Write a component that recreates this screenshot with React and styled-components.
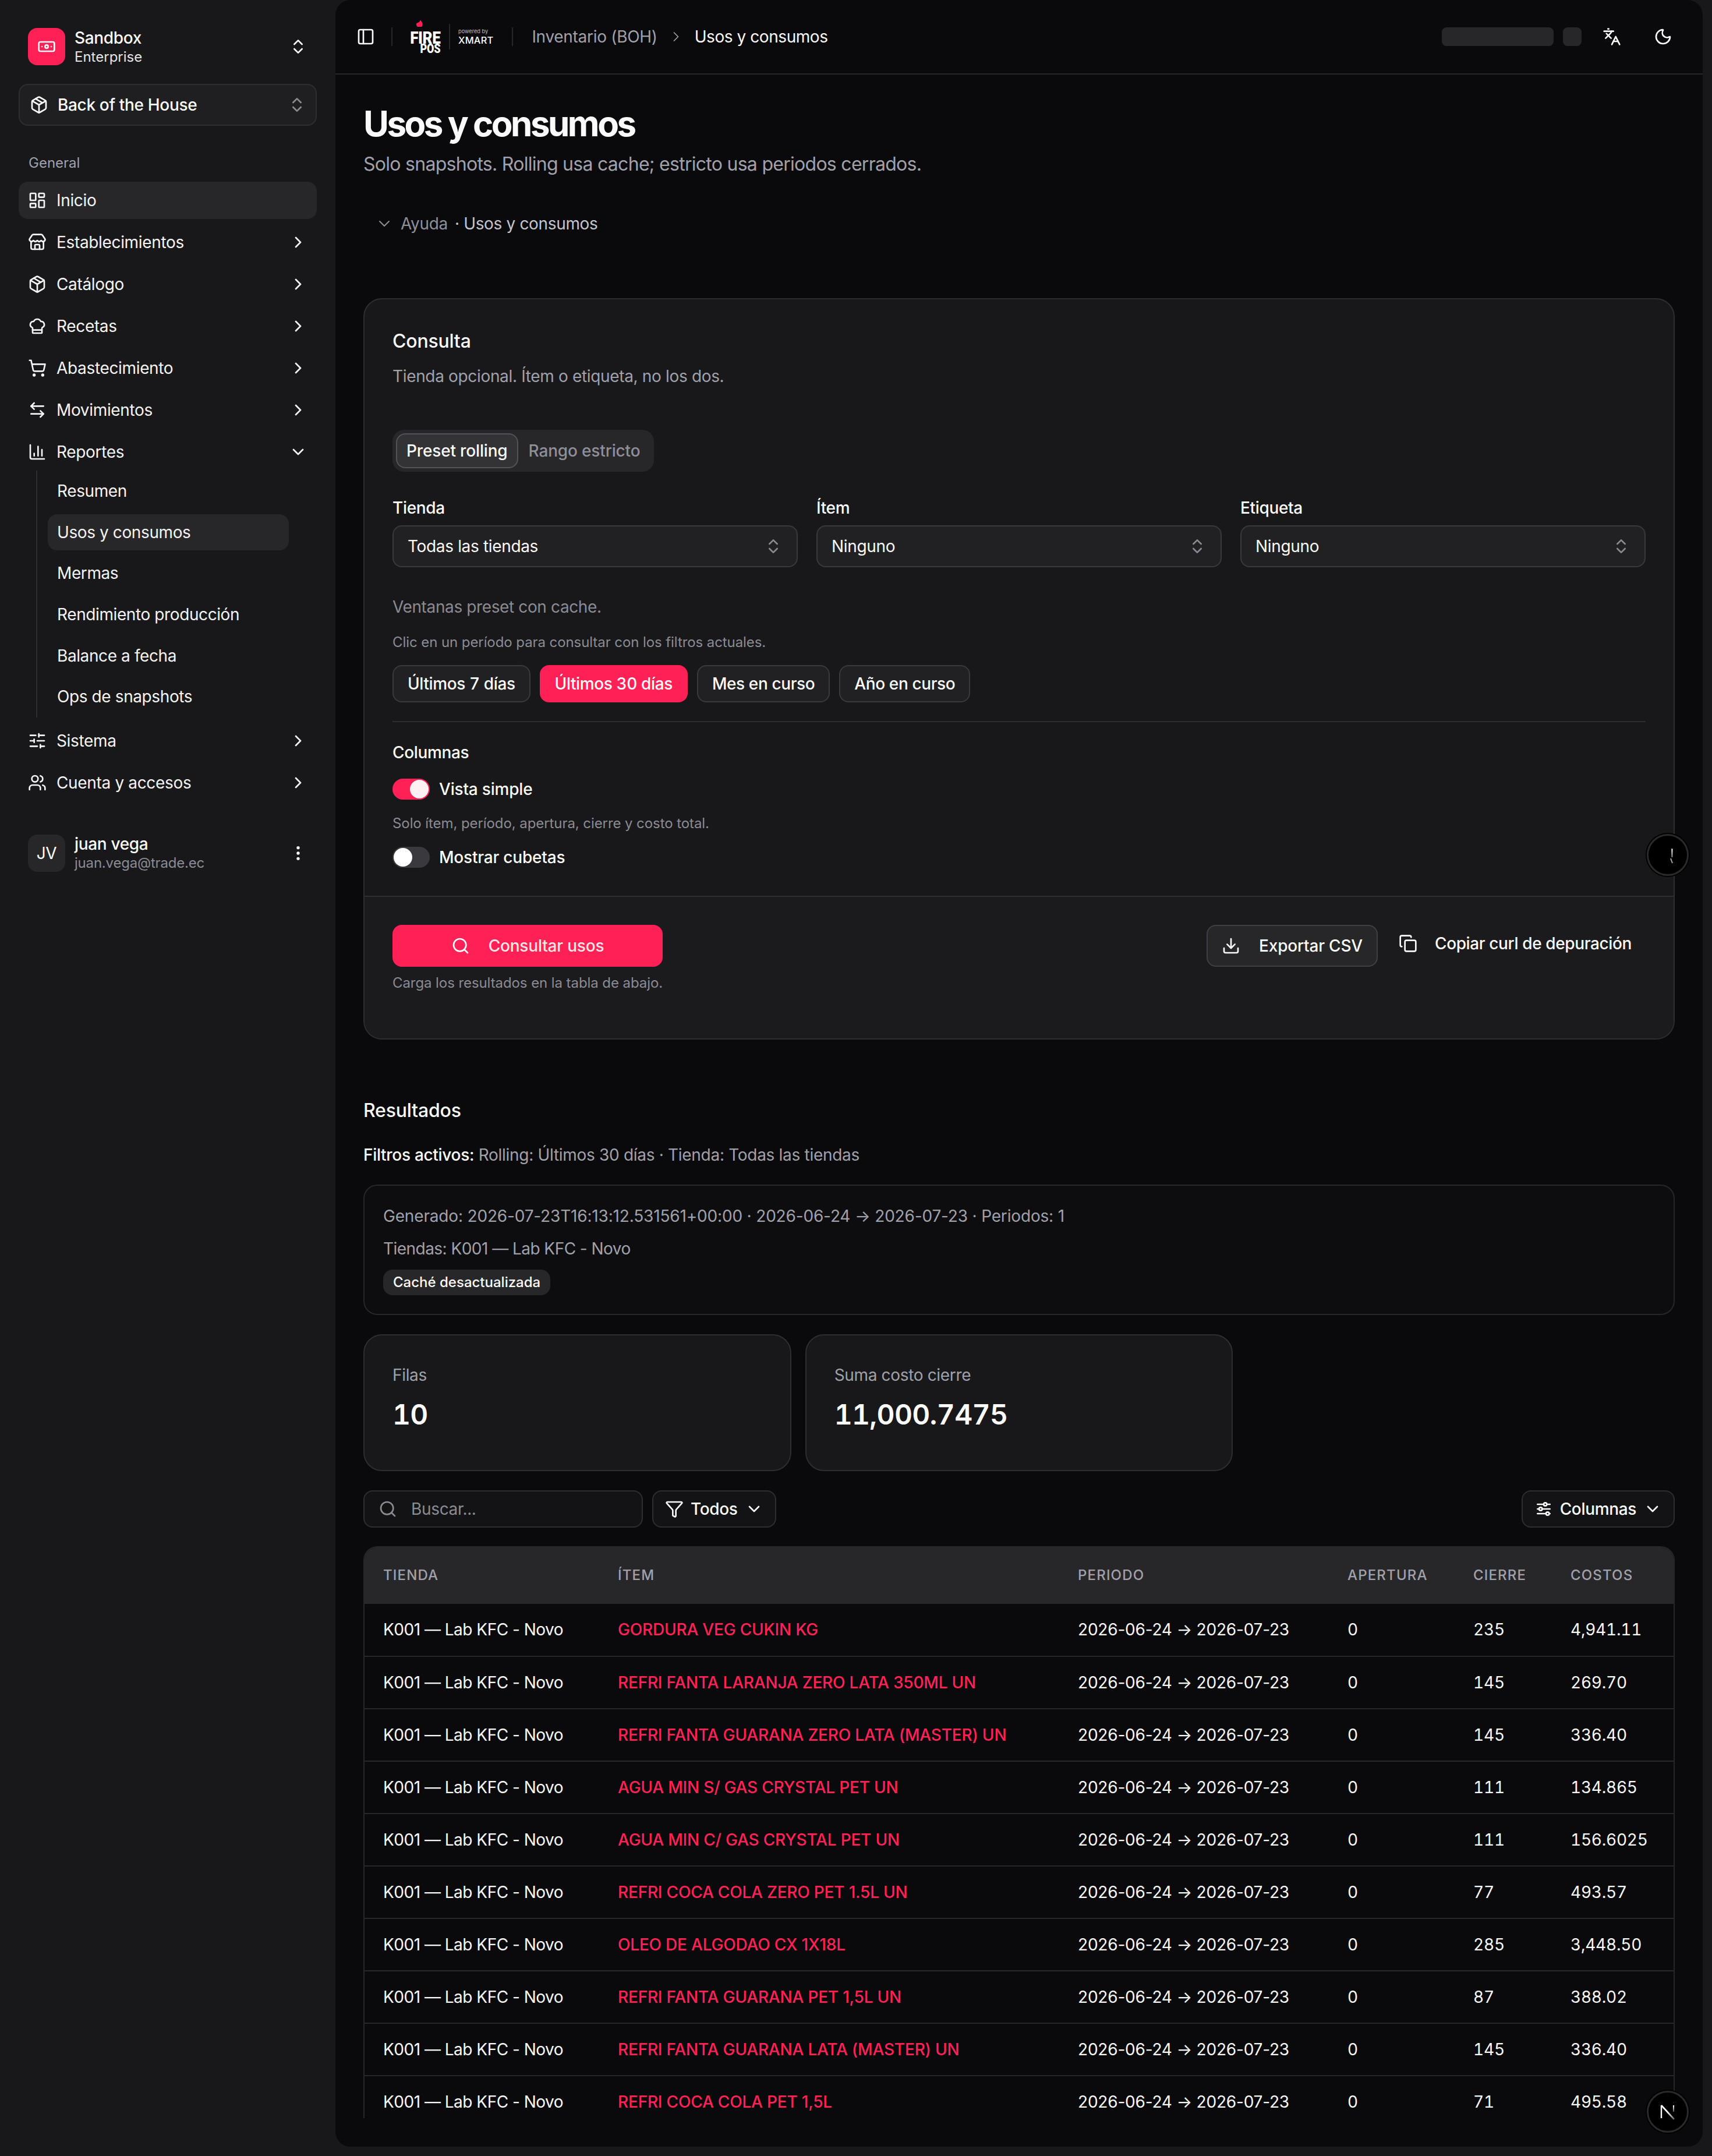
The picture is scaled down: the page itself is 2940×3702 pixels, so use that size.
import React from "react";
import styled, { createGlobalStyle } from "styled-components";
import {
  Banknote, ChevronsUpDown, Package, LayoutDashboard, Store, ChefHat, ShoppingCart, ArrowLeftRight,
  ChartColumn, SlidersHorizontal, Users, EllipsisVertical, PanelLeft, ChevronRight, ChevronDown,
  Languages, Moon, Download, Copy, Search, Funnel,
} from "lucide-react";
import { TbAdjustmentsHorizontal } from "react-icons/tb";

const Global = createGlobalStyle`
  html, body { margin: 0; padding: 0; background: #18181b; }
  #root { zoom: 2; width: 1470px; height: 1851px; overflow: hidden; }
  * { box-sizing: border-box; }
  body { font-family: Inter, "Noto Sans", sans-serif; color: #fafafa; font-size: 14px; line-height: 20px; letter-spacing: -0.17px; }
`;

const Shell = styled.div`
  position: relative; display: flex; width: 1470px; height: 1851px; background: #18181b;
`;

/* ---------- Sidebar ---------- */
const Sidebar = styled.aside`
  width: 288px; flex: none; display: flex; flex-direction: column; padding: 24px 16px 0;
`;
const TeamRow = styled.div`
  display: flex; align-items: center; gap: 8px; padding: 0 8px; height: 32px;
`;
const TeamLogo = styled.div`
  width: 32px; height: 32px; flex: none; border-radius: 8px; display: flex; align-items: center; justify-content: center;
  background: ${p => p.$muted ? "#27272a" : "#ff2056"}; color: #fafafa; font-size: 14px;
`;
const TeamText = styled.div`
  flex: 1; display: flex; flex-direction: column; min-width: 0;
`;
const TeamName = styled.span`
  font-size: 14px; line-height: 17.5px; font-weight: 500; color: #fafafa;
`;
const TeamPlan = styled.span`
  font-size: 12px; line-height: 15px; letter-spacing: ${p => p.$muted ? "-0.1px" : "0"}; color: ${p => p.$muted ? "#8b8b94" : "#e4e4e7"};
`;
const ModuleSelect = styled.div`
  margin-top: 16px; height: 36px; display: flex; align-items: center; padding: 0 8px 0 8.5px; gap: 8px;
  background: #1f1f22; border: 1px solid #2e2e32; border-radius: 8px;
  font-size: 14px; font-weight: 500; color: #fafafa;
`;
const ModuleName = styled.span`flex: 1;`;
const Dim = styled.span`display: flex; color: #8b8b94;`;
const GroupLabel = styled.div`
  margin-top: 24px; padding: 0 8.5px; font-size: 12px; line-height: 16px; color: #a1a1aa; letter-spacing: 0;
`;
const Menu = styled.nav`
  margin-top: 8px; display: flex; flex-direction: column; gap: 4px;
`;
const MenuItem = styled.div`
  height: 32px; display: flex; align-items: center; gap: 8.5px; padding: 0 8px; border-radius: 8px;
  font-size: 14px; color: #f4f4f5; background: ${p => p.$active ? "#27272a" : "transparent"};
`;
const MenuText = styled.span`flex: 1;`;
const SubMenu = styled.div`
  margin: -4px 0 0 15px; width: 217px; padding: 2px 0 2px 9px; border-left: 1px solid #2e2e32;
  display: flex; flex-direction: column; gap: 4px;
`;
const SubItem = styled.div`
  height: 31.3px; display: flex; align-items: center; padding: 0 8px; border-radius: 8px;
  font-size: 14px; letter-spacing: -0.2px; color: #f4f4f5; background: ${p => p.$active ? "#27272a" : "transparent"};
`;
const UserRow = styled(TeamRow)`
  margin-top: 28.5px;
`;

/* ---------- Main frame ---------- */
const Main = styled.main`
  width: 1174px; height: 1843px; flex: none; background: #0a0a0c; border-radius: 13px;
  display: flex; flex-direction: column; padding-bottom: 24.5px; overflow: hidden;
`;
const Header = styled.header`
  height: 64px; flex: none; display: flex; align-items: center; padding: 0 16px 0 12px;
  border-bottom: 1px solid #27272a;
`;
const IconButton = styled.div`
  width: ${p => p.$size || 36}px; height: ${p => p.$size || 28}px; display: flex; align-items: center; justify-content: center; flex: none; color: #fafafa;
`;
const VSep = styled.div`
  width: 1px; height: ${p => p.$h || 16}px; background: #27272a; flex: none; margin: ${p => p.$m || "0"};
`;
const Logo = styled.div`
  position: relative; display: flex; align-items: center; height: 32px; flex: none; margin-left: -1px;
`;
const FireMark = styled.div`
  position: relative; width: 26px; height: 29px; display: flex; flex-direction: column; align-items: flex-end; justify-content: flex-end; font-family: Roboto, sans-serif; font-weight: 900; color: #fff;
`;
const FireFlame = styled.svg`
  position: absolute; left: 5px; top: 0; width: 6px; height: 6px;
`;
const FireWord = styled.span`
  font-size: 14.8px; line-height: 11.5px; letter-spacing: -0.2px; transform: translateY(1.6px) scaleX(.88); transform-origin: right center; white-space: nowrap;
`;
const PosWord = styled.span`
  font-size: 11px; line-height: 9px; letter-spacing: -0.2px; transform: translateY(.5px) scaleX(.82); transform-origin: right center;
`;
const PowerBox = styled.div`
  display: flex; flex-direction: column; color: #fff;
`;
const Powered = styled.span`
  font-size: 4.6px; line-height: 6px; color: #bdbdc2; letter-spacing: 0;
`;
const Xmart = styled.span`
  font-size: 8.2px; line-height: 9px; font-weight: 500; letter-spacing: .1px;
`;
const Crumb = styled.span`
  font-size: 14px; letter-spacing: ${p => p.$on ? "-0.22px" : "-0.15px"}; color: ${p => p.$on ? "#fafafa" : "#a1a1aa"}; white-space: nowrap;
`;
const CrumbChevron = styled.span`
  display: flex; color: #a1a1aa; margin: 0 9px;
`;
const HeaderRight = styled.div`
  margin-left: auto; display: flex; align-items: center; gap: 8px;
`;
const Skeleton = styled.div`
  width: ${p => p.$w}px; height: 16px; border-radius: 4px; background: #27272a;
`;

/* ---------- Scrolling content ---------- */
const Content = styled.div`
  flex: 1; min-height: 0; overflow: hidden; padding: 24px 24px 0;
`;
const Title = styled.h1`
  margin: 0; font-size: 30px; line-height: 36px; font-weight: 700; letter-spacing: -1.75px; color: #fafafa;
`;
const Subtitle = styled.p`
  margin: 5px 0 0; font-size: 16px; line-height: 24px; letter-spacing: -0.36px; color: #a1a1aa;
`;
const HelpRow = styled.div`
  margin-top: 21px; height: 36px; padding-left: 10px; display: flex; align-items: center; gap: 6px; font-size: 14px; color: #8f8f98;
`;
const HelpTitle = styled.span`color: #c4c4cc;`;

const Card = styled.section`
  margin-top: 46px; height: 636.5px; border: 1px solid #2e2e32; border-radius: 16px; background: #18181b; display: flex; flex-direction: column; overflow: hidden;
`;
const CardBody = styled.div`
  padding: 24px 24px 0; height: 512px; flex: none;
`;
const CardTitle = styled.h2`
  margin: 0; font-size: 16px; line-height: 24px; font-weight: 500; letter-spacing: -0.1px; color: #fafafa;
`;
const CardDesc = styled.p`
  margin: 8px 0 0; font-size: 14px; line-height: 20px; color: #a1a1aa;
`;
const Tabs = styled.div`
  margin-top: 36px; display: inline-flex; height: 36px; padding: 3px; border-radius: 10px; background: #27272a; vertical-align: top;
`;
const Tab = styled.div`
  height: 30px; padding: 0 8px; display: flex; align-items: center; border-radius: 8px; font-size: 14px; font-weight: 500; letter-spacing: -0.08px;
  border: 1px solid ${p => p.$on ? "#52525b" : "transparent"}; background: ${p => p.$on ? "#333336" : "transparent"};
  color: ${p => p.$on ? "#fafafa" : "#8f8f98"};
`;
const FieldGrid = styled.div`
  margin-top: 21px; display: grid; grid-template-columns: repeat(3, 1fr); gap: 16px;
`;
const Field = styled.div`
  display: flex; flex-direction: column; gap: 5px;
`;
const Label = styled.label`
  font-size: 14px; line-height: 20px; font-weight: 500; color: #fafafa;
`;
const SelectBox = styled.div`
  height: 36px; display: flex; align-items: center; justify-content: space-between; padding: 0 12px;
  background: #212124; border: 1px solid #3a3a3e; border-radius: 8px; font-size: 14px; color: #fafafa;
`;
const Muted = styled.p`
  margin: ${p => p.$m || "0"}; font-size: ${p => p.$small ? 12 : 14}px; line-height: ${p => p.$small ? 16 : 20}px; letter-spacing: ${p => p.$small ? "-0.04px" : "-0.19px"}; color: #8b8b94;
`;
const PresetRow = styled.div`
  margin-top: 11.5px; display: flex; gap: 8px;
`;
const Preset = styled.div`
  height: 32px; padding: 0 12px; display: flex; align-items: center; border-radius: 8px; font-size: 14px; font-weight: 500; letter-spacing: -0.2px; font-variant-numeric: tabular-nums;
  border: 1px solid ${p => p.$on ? "#ff2056" : "#3a3a3e"}; background: ${p => p.$on ? "#ff2056" : "#212124"}; color: #fafafa;
`;
const Divider = styled.hr`
  margin: 16px 0 0; border: 0; height: 1px; background: #2e2e32;
`;
const ColumnsLabel = styled.div`
  margin-top: 16px; font-size: 14px; line-height: 20px; font-weight: 500; color: #fafafa;
`;
const SwitchRow = styled.div`
  margin-top: ${p => p.$mt}px; display: flex; align-items: center; gap: 8px; height: 20px; font-size: 14px; font-weight: 500; letter-spacing: -0.1px; color: #fafafa;
`;
const Track = styled.span`
  width: 32px; height: 18.4px; border-radius: 10px; padding: 1.2px; display: flex; flex: none;
  justify-content: ${p => p.$on ? "flex-end" : "flex-start"}; background: ${p => p.$on ? "#ff2056" : "#3a3a3e"};
`;
const Thumb = styled.span`
  width: 16px; height: 16px; border-radius: 50%; background: ${p => p.$on ? "#fff1f3" : "#ffffff"};
`;
const CardFooter = styled.div`
  flex: 1; border-top: 1px solid #2e2e32; background: #1b1b1e; padding: 24px 24px 0; display: flex; justify-content: space-between; align-items: flex-start;
`;
const SubmitBox = styled.div`
  display: flex; flex-direction: column; gap: 6px;
`;
const Primary = styled.div`
  width: 232px; height: 36px; display: flex; align-items: center; justify-content: center; gap: 16px; border-radius: 8px;
  background: #ff2056; color: #ffe4e6; font-size: 14px; font-weight: 500; letter-spacing: -0.1px;
`;
const FooterActions = styled.div`
  display: flex; align-items: flex-start; gap: 6px;
`;
const Outline = styled.div`
  height: 36px; display: flex; align-items: center; gap: 16px; padding: 0 12px; border-radius: 8px; border: 1px solid #3f3f46; background: #27272a; font-size: 14px; font-weight: 500; letter-spacing: -0.1px; color: #fafafa;
`;
const Ghost = styled.div`
  height: 32px; display: flex; align-items: center; gap: 15px; padding: 0 12px; font-size: 14px; font-weight: 500; letter-spacing: -0.19px; color: #fafafa;
`;

/* ---------- Results ---------- */
const ResultsTitle = styled.h2`
  margin: 49px 0 0; font-size: 16px; line-height: 24px; font-weight: 500; letter-spacing: -0.1px; color: #fafafa;
`;
const ActiveFilters = styled.p`
  margin: 16px 0 0; font-size: 14px; line-height: 20px; letter-spacing: -0.15px; color: #a1a1aa;
`;
const Strong = styled.span`font-weight: 500; color: #fafafa;`;
const MetaCard = styled.div`
  margin-top: 15.5px; padding: 16px; border: 1px solid #27272a; border-radius: 12px; background: #0d0d10; display: flex; flex-direction: column; align-items: flex-start; gap: 8px; font-size: 14px; line-height: 20px; color: #a1a1aa;
`;
const MetaLine = styled.span`
  letter-spacing: ${p => p.$ls}px;
`;
const Badge = styled.span`
  height: 22px; padding: 0 8.5px; display: flex; align-items: center; border-radius: 8px; background: #27272a; font-size: 12px; font-weight: 500; letter-spacing: 0; color: #fafafa;
`;
const KpiGrid = styled.div`
  margin-top: 16.5px; display: grid; grid-template-columns: repeat(3, 1fr); gap: 12px;
`;
const Kpi = styled.div`
  height: 117.3px; padding: 24px; border: 1px solid #2e2e32; border-radius: 16px; background: #18181b;
`;
const KpiLabel = styled.div`
  font-size: 14px; line-height: 20px; color: #a1a1aa;
`;
const KpiValue = styled.div`
  margin-top: 8px; font-size: 24px; line-height: 32px; font-weight: 600; color: #fafafa; letter-spacing: -0.35px; font-variant-numeric: tabular-nums;
`;
const Toolbar = styled.div`
  margin-top: 16.7px; display: flex; align-items: center; gap: 8px;
`;
const SearchBox = styled.div`
  width: 240px; height: 32px; display: flex; align-items: center; gap: 12px; padding: 0 12px; border: 1px solid #2e2e32; border-radius: 8px; background: #131316; color: #8b8b94; font-size: 14px;
`;
const ToolButton = styled.div`
  height: 32px; display: flex; align-items: center; gap: ${p => p.$gap || 6}px; padding: 0 10px; border: 1px solid #2e2e32; border-radius: 8px; background: #131316; color: #fafafa; font-size: 14px; font-weight: 500; margin-left: ${p => p.$right ? "auto" : "0"};
`;
const TableWrap = styled.div`
  margin-top: 16px; border: 1px solid #27272a; border-radius: 12px 12px 0 0; overflow: hidden;
`;
const Table = styled.table`
  width: 100%; border-collapse: collapse; table-layout: fixed; font-size: 14px;
`;
const Th = styled.th`
  height: 48.5px; padding: 0 16px; text-align: left; background: #27272a; color: #a1a1aa; font-size: 12px; font-weight: 500; letter-spacing: .58px; text-transform: uppercase; white-space: nowrap;
`;
const Tr = styled.tr`
  border-top: 1px solid #27272a;
  &:first-child { border-top: 0; }
`;
const Td = styled.td`
  height: 45px; padding: 0 16px; color: ${p => p.$link ? "#ff2056" : "#fafafa"}; font-weight: ${p => p.$link ? 500 : 400}; white-space: nowrap; letter-spacing: ${p => p.$ls}px;
  font-variant-numeric: ${p => p.$num ? "tabular-nums" : "normal"};
`;
const DevBadge = styled.div`
  position: absolute; left: 1414px; top: ${p => p.$top}px; width: 36px; height: 36px; border-radius: 50%; background: #000; border: 1.5px solid #2a2a2c; display: flex; align-items: center; justify-content: center; box-shadow: 0 0 0 1px #000;
`;

const Ic = ({ as: C, size = 16, sw = 2 }) => <C size={size} strokeWidth={sw} />;

const nav = [
  [Store, "Establecimientos"], [Package, "Catálogo"], [ChefHat, "Recetas"], [ShoppingCart, "Abastecimiento"], [ArrowLeftRight, "Movimientos"],
];
const subs = ["Resumen", "Usos y consumos", "Mermas", "Rendimiento producción", "Balance a fecha", "Ops de snapshots"];
const rows = [
  ["GORDURA VEG CUKIN KG", "235", "4,941.11"],
  ["REFRI FANTA LARANJA ZERO LATA 350ML UN", "145", "269.70"],
  ["REFRI FANTA GUARANA ZERO LATA (MASTER) UN", "145", "336.40"],
  ["AGUA MIN S/ GAS CRYSTAL PET UN", "111", "134.865"],
  ["AGUA MIN C/ GAS CRYSTAL PET UN", "111", "156.6025"],
  ["REFRI COCA COLA ZERO PET 1.5L UN", "77", "493.57"],
  ["OLEO DE ALGODAO CX 1X18L", "285", "3,448.50"],
  ["REFRI FANTA GUARANA PET 1,5L UN", "87", "388.02"],
  ["REFRI FANTA GUARANA LATA (MASTER) UN", "145", "336.40"],
  ["REFRI COCA COLA PET 1,5L", "71", "495.58"],
];
const widths = [201.5, 395, 231.5, 108, 83.5, 104.5];
const heads = ["Tienda", "Ítem", "Periodo", "Apertura", "Cierre", "Costos"];

export default function App() {
  return (
    <Shell>
      <Global />
      <Sidebar>
        <TeamRow>
          <TeamLogo><Banknote size={16} strokeWidth={2} /></TeamLogo>
          <TeamText><TeamName>Sandbox</TeamName><TeamPlan>Enterprise</TeamPlan></TeamText>
          <Ic as={ChevronsUpDown} />
        </TeamRow>
        <ModuleSelect>
          <Ic as={Package} />
          <ModuleName>Back of the House</ModuleName>
          <Dim><Ic as={ChevronsUpDown} /></Dim>
        </ModuleSelect>
        <GroupLabel>General</GroupLabel>
        <Menu>
          <MenuItem $active><Ic as={LayoutDashboard} /><MenuText>Inicio</MenuText></MenuItem>
          {nav.map(([I, t]) => (
            <MenuItem key={t}><Ic as={I} /><MenuText>{t}</MenuText><Ic as={ChevronRight} /></MenuItem>
          ))}
          <MenuItem><Ic as={ChartColumn} /><MenuText>Reportes</MenuText><Ic as={ChevronDown} /></MenuItem>
          <SubMenu>
            {subs.map(s => <SubItem key={s} $active={s === "Usos y consumos"}>{s}</SubItem>)}
          </SubMenu>
          <MenuItem><Ic as={SlidersHorizontal} /><MenuText>Sistema</MenuText><Ic as={ChevronRight} /></MenuItem>
          <MenuItem><Ic as={Users} /><MenuText>Cuenta y accesos</MenuText><Ic as={ChevronRight} /></MenuItem>
        </Menu>
        <UserRow>
          <TeamLogo $muted>JV</TeamLogo>
          <TeamText><TeamName>juan vega</TeamName><TeamPlan $muted>juan.vega@trade.ec</TeamPlan></TeamText>
          <Ic as={EllipsisVertical} />
        </UserRow>
      </Sidebar>

      <Main>
        <Header>
          <IconButton $size={28}><Ic as={PanelLeft} /></IconButton>
          <VSep $m="0 16px 0 8px" />
          <Logo>
            <FireMark>
              <FireFlame viewBox="0 0 12 12"><path fill="#ff2056" d="M8 0c.6 2.4 3.6 4 3.6 7.2A4.6 4.6 0 0 1 1 8.6C.4 6.4 2.2 5.2 3.6 5 5.4 4.6 7.4 2.6 8 0z" /></FireFlame>
              <FireWord>FIRE</FireWord>
              <PosWord>POS</PosWord>
            </FireMark>
            <VSep $h={22} $m="0 7px 0 7.5px" />
            <PowerBox><Powered>powered by</Powered><Xmart>XMART</Xmart></PowerBox>
          </Logo>
          <VSep $m="0 16px 0 16px" />
          <Crumb>Inventario (BOH)</Crumb>
          <CrumbChevron><ChevronRight size={14} strokeWidth={1.5} /></CrumbChevron>
          <Crumb $on>Usos y consumos</Crumb>
          <HeaderRight>
            <Skeleton $w={96} />
            <Skeleton $w={16} />
            <IconButton><Ic as={Languages} /></IconButton>
            <IconButton><Ic as={Moon} /></IconButton>
          </HeaderRight>
        </Header>

        <Content>
          <Title>Usos y consumos</Title>
          <Subtitle>Solo snapshots. Rolling usa cache; estricto usa periodos cerrados.</Subtitle>
          <HelpRow>
            <ChevronDown size={16} strokeWidth={1.5} />
            <span>Ayuda</span>
            <HelpTitle>· Usos y consumos</HelpTitle>
          </HelpRow>

          <Card>
            <CardBody>
              <CardTitle>Consulta</CardTitle>
              <CardDesc>Tienda opcional. Ítem o etiqueta, no los dos.</CardDesc>
              <Tabs>
                <Tab $on>Preset rolling</Tab>
                <Tab>Rango estricto</Tab>
              </Tabs>
              <FieldGrid>
                {[["Tienda", "Todas las tiendas"], ["Ítem", "Ninguno"], ["Etiqueta", "Ninguno"]].map(([l, v]) => (
                  <Field key={l}>
                    <Label>{l}</Label>
                    <SelectBox>{v}<Dim><Ic as={ChevronsUpDown} /></Dim></SelectBox>
                  </Field>
                ))}
              </FieldGrid>
              <Muted $m="24px 0 0">Ventanas preset con cache.</Muted>
              <Muted $small $m="12.5px 0 0">Clic en un período para consultar con los filtros actuales.</Muted>
              <PresetRow>
                <Preset>Últimos 7 días</Preset>
                <Preset $on>Últimos 30 días</Preset>
                <Preset>Mes en curso</Preset>
                <Preset>Año en curso</Preset>
              </PresetRow>
              <Divider />
              <ColumnsLabel>Columnas</ColumnsLabel>
              <SwitchRow $mt={11.5}><Track $on><Thumb $on /></Track>Vista simple</SwitchRow>
              <Muted $small $m="11.5px 0 0">Solo ítem, período, apertura, cierre y costo total.</Muted>
              <SwitchRow $mt={11}><Track><Thumb /></Track>Mostrar cubetas</SwitchRow>
            </CardBody>
            <CardFooter>
              <SubmitBox>
                <Primary><Search size={16} strokeWidth={2} color="#fff" />Consultar usos</Primary>
                <Muted $small>Carga los resultados en la tabla de abajo.</Muted>
              </SubmitBox>
              <FooterActions>
                <Outline><Ic as={Download} />Exportar CSV</Outline>
                <Ghost><Ic as={Copy} />Copiar curl de depuración</Ghost>
              </FooterActions>
            </CardFooter>
          </Card>

          <ResultsTitle>Resultados</ResultsTitle>
          <ActiveFilters><Strong>Filtros activos:</Strong> Rolling: Últimos 30 días · Tienda: Todas las tiendas</ActiveFilters>
          <MetaCard>
            <MetaLine $ls={-0.085}>Generado: 2026-07-23T16:13:12.531561+00:00 · 2026-06-24 → 2026-07-23 · Periodos: 1</MetaLine>
            <MetaLine $ls={-0.27}>Tiendas: K001 — Lab KFC - Novo</MetaLine>
            <Badge>Caché desactualizada</Badge>
          </MetaCard>
          <KpiGrid>
            <Kpi><KpiLabel>Filas</KpiLabel><KpiValue>10</KpiValue></Kpi>
            <Kpi><KpiLabel>Suma costo cierre</KpiLabel><KpiValue>11,000.7475</KpiValue></Kpi>
          </KpiGrid>
          <Toolbar>
            <SearchBox><Search size={16} strokeWidth={2} />Buscar...</SearchBox>
            <ToolButton><Ic as={Funnel} />Todos<ChevronDown size={16} strokeWidth={2} /></ToolButton>
            <ToolButton $right><TbAdjustmentsHorizontal size={16} />Columnas<ChevronDown size={16} strokeWidth={2} /></ToolButton>
          </Toolbar>
          <TableWrap>
            <Table>
              <colgroup>{widths.map((w, i) => <col key={i} style={{ width: w }} />)}</colgroup>
              <thead><tr>{heads.map(h => <Th key={h}>{h}</Th>)}</tr></thead>
              <tbody>
                {rows.map((r, i) => (
                  <Tr key={i}>
                    <Td $ls={-0.25}>K001 — Lab KFC - Novo</Td>
                    <Td $link $ls={-0.1}>{r[0]}</Td>
                    <Td $ls={-0.1}>2026-06-24 → 2026-07-23</Td>
                    <Td $num $ls={0}>0</Td>
                    <Td $num $ls={-0.1}>{r[1]}</Td>
                    <Td $num $ls={-0.12}>{r[2]}</Td>
                  </Tr>
                ))}
              </tbody>
            </Table>
          </TableWrap>
        </Content>
      </Main>

      <DevBadge $top={716}>
        <svg width="33" height="33" viewBox="1.5 1.5 33 33" fill="none">
          <defs><linearGradient id="fadeA" gradientUnits="userSpaceOnUse" x1="0" y1="12.7" x2="0" y2="21"><stop offset="0" stopColor="#fff" /><stop offset="1" stopColor="#666" /></linearGradient></defs>
          <path d="M21.7 12.7V20" stroke="url(#fadeA)" strokeWidth="1.1" />
          <path d="M20.5 21L22 25" stroke="#aaa" strokeWidth="1" />
        </svg>
      </DevBadge>
      <DevBadge $top={1795}>
        <svg width="33" height="33" viewBox="1.5 1.5 33 33" fill="none">
          <defs>
            <linearGradient id="fadeB" gradientUnits="userSpaceOnUse" x1="0" y1="12.5" x2="0" y2="18"><stop offset="0" stopColor="#fff" /><stop offset="1" stopColor="#555" /></linearGradient>
            <linearGradient id="fadeC" gradientUnits="userSpaceOnUse" x1="18" y1="18" x2="24" y2="24.5"><stop offset="0" stopColor="#fff" /><stop offset="1" stopColor="#555" /></linearGradient>
          </defs>
          <path d="M12.5 23.5V12.5" stroke="#fff" strokeWidth="1.2" />
          <path d="M12.5 12.5L23.5 24.5" stroke="url(#fadeC)" strokeWidth="1.3" />
          <path d="M23 12.5V18" stroke="url(#fadeB)" strokeWidth="1.1" />
        </svg>
      </DevBadge>
    </Shell>
  );
}
